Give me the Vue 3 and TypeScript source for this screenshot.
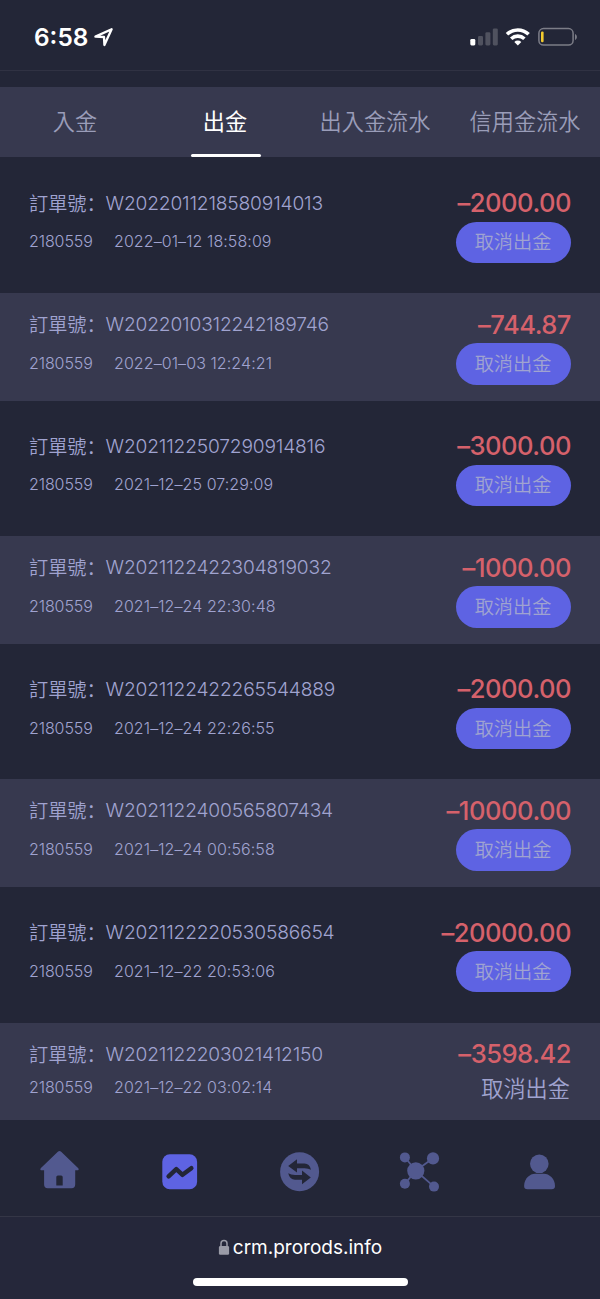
<script setup lang="ts">
interface Order {
  id: string
  time: string
  amount: string
  plain?: boolean
}

const tabs: string[] = ['入金', '出金', '出入金流水', '信用金流水']
const activeTab = 1
const account = '2180559'

const orders: Order[] = [
  { id: 'W2022011218580914013', time: '2022–01–12 18:58:09', amount: '–2000.00' },
  { id: 'W2022010312242189746', time: '2022–01–03 12:24:21', amount: '–744.87' },
  { id: 'W2021122507290914816', time: '2021–12–25 07:29:09', amount: '–3000.00' },
  { id: 'W2021122422304819032', time: '2021–12–24 22:30:48', amount: '–1000.00' },
  { id: 'W2021122422265544889', time: '2021–12–24 22:26:55', amount: '–2000.00' },
  { id: 'W2021122400565807434', time: '2021–12–24 00:56:58', amount: '–10000.00' },
  { id: 'W2021122220530586654', time: '2021–12–22 20:53:06', amount: '–20000.00' },
  { id: 'W2021122203021412150', time: '2021–12–22 03:02:14', amount: '–3598.42', plain: true },
]
</script>

<template>
  <div class="screen">
    <header class="status">
      <div class="clock">
        <span class="time">6:58</span>
        <svg class="arrow" width="20" height="20" viewBox="0 0 20 20">
          <path d="M1.4 9.6 17.6 2.2 10.4 18 10 10Z" fill="none" stroke="#fff" stroke-width="2.3" stroke-linejoin="round" />
        </svg>
      </div>
      <svg class="indicators" width="110" height="20" viewBox="0 0 110 20">
        <rect x="0.3" y="12" width="5" height="6.4" rx="1.3" fill="#fff" />
        <rect x="8" y="9" width="5" height="9.4" rx="1.3" fill="#50525f" />
        <rect x="15.4" y="5.2" width="5" height="13.2" rx="1.3" fill="#50525f" />
        <rect x="22.8" y="1.4" width="5" height="17" rx="1.3" fill="#50525f" />
        <g fill="none" stroke="#fff" stroke-width="3.6">
          <path d="M37 7.2a15.8 15.8 0 0 1 21.6 0" />
          <path d="M41.2 11.7a9.7 9.7 0 0 1 13.2 0" />
        </g>
        <path d="M47.8 18.4 44.3 14.9a5 5 0 0 1 7 0Z" fill="#fff" />
        <rect x="68.9" y="1.6" width="34.2" height="16.4" rx="4.6" fill="none" stroke="#7c7d87" stroke-width="1.5" />
        <rect x="71" y="4.4" width="2.6" height="10.8" rx="1.2" fill="#f3cb2e" />
        <path d="M105 6.9c2.5 1 2.5 5 0 6Z" fill="#7c7d87" />
      </svg>
    </header>

    <nav class="tabs">
      <div v-for="(tab, i) in tabs" :key="tab" class="tab" :class="{ active: i === activeTab }">
        <span>{{ tab }}</span>
      </div>
    </nav>

    <main class="orders">
      <article v-for="(order, i) in orders" :key="order.id" class="order" :class="{ light: i % 2 === 1, plain: order.plain }">
        <div class="line main-line">
          <div class="title"><span class="label">訂單號：</span><span class="id">{{ order.id }}</span></div>
          <div class="amount">{{ order.amount }}</div>
        </div>
        <div class="line sub-line">
          <div class="meta"><span class="account">{{ account }}</span><span class="date">{{ order.time }}</span></div>
          <button class="cancel" type="button">取消出金</button>
        </div>
      </article>
    </main>

    <footer class="dock">
      <div class="dock-item">
        <svg width="44" height="44" viewBox="0 0 44 44" fill="#52598f">
          <path fill-rule="evenodd" d="M20.1 1.6Q21.5.4 22.9 1.6L40.3 18.2Q41.5 20.3 39.1 20.3H37.2V34.6Q37.2 38.3 33.5 38.3H9.7Q6.1 38.3 6.1 34.6V20.3H3.9Q1.5 20.3 2.7 18.2ZM18.3 27V35.4H24.7V27Q24.7 25.4 23.1 25.4H19.9Q18.3 25.4 18.3 27Z" />
        </svg>
      </div>
      <div class="dock-item">
        <svg width="44" height="44" viewBox="0 0 44 44">
          <rect x="4.3" y="4.3" width="34.8" height="35" rx="7.5" fill="#5e63e3" />
          <path d="M10.6 26.3 18.3 19.2 24.5 24.8 33.3 18.2" fill="none" stroke="#232637" stroke-width="4.5" stroke-linecap="round" stroke-linejoin="round" />
        </svg>
      </div>
      <div class="dock-item">
        <svg width="44" height="44" viewBox="0 0 44 44">
          <circle cx="21.6" cy="21.8" r="19.5" fill="#52598f" />
          <path d="M10.2 16 19 9.2V13.6H26.5Q31.5 13.6 33 19.8Q30.5 18.3 26.5 18.3H19V22.6Z" fill="#232637" />
          <path d="M32.8 27.4 24 34.2V29.8H17Q11.8 29.8 10.2 23.3Q13 25.1 17 25.1H24V20.6Z" fill="#232637" />
        </svg>
      </div>
      <div class="dock-item">
        <svg width="44" height="44" viewBox="0 0 44 44" fill="#52598f">
          <path d="M7 7.3 17.8 20.8 35 8.3M7 33.6 17.8 20.8 36 36.6" fill="none" stroke="#52598f" stroke-width="1.7" />
          <circle cx="17.8" cy="20.8" r="8.6" />
          <circle cx="6.9" cy="7.4" r="5" />
          <circle cx="35" cy="8.4" r="6.1" />
          <circle cx="6.9" cy="33.7" r="5" />
          <circle cx="36" cy="36.6" r="5" />
        </svg>
      </div>
      <div class="dock-item">
        <svg width="44" height="44" viewBox="0 0 44 44" fill="#52598f">
          <circle cx="21.3" cy="13.8" r="9.3" />
          <path d="M6.1 36C6.1 28.5 12 23.8 17 23.8H26C31 23.8 37 28.5 37 36Q37 39.2 33.6 39.2H9.5Q6.1 39.2 6.1 36Z" />
        </svg>
      </div>
    </footer>

    <div class="browser-bar">
      <div class="address">
        <svg width="12" height="17" viewBox="0 0 12 17">
          <path d="M3 8V4.6a3 3 0 0 1 6 0V8" fill="none" stroke="#9a9ba7" stroke-width="1.5" />
          <rect x="0.9" y="7" width="10.2" height="8.8" rx="1.4" fill="#9a9ba7" />
        </svg>
        <span>crm.prorods.info</span>
      </div>
      <div class="home-bar"></div>
    </div>
  </div>
</template>

<style>
body {
  margin: 0;
  background: #232637;
}
</style>

<style scoped>
.screen {
  display: flex;
  flex-direction: column;
  width: 600px;
  height: 1299px;
  overflow: hidden;
  background: #232637;
  color: #a0a3d0;
  font-family: Inter, "Noto Sans CJK TC", sans-serif;
}

.status {
  display: flex;
  justify-content: space-between;
  box-sizing: border-box;
  height: 71px;
  margin-bottom: 16px;
  padding: 27px 20px 0 34px;
  border-bottom: 1px solid #303243;
}

.clock {
  display: flex;
  height: 20px;
  align-items: center;
  gap: 6px;
  color: #fff;
}

.time {
  font-size: 24.4px;
  font-weight: 600;
  line-height: 20px;
}

.tabs {
  display: flex;
  flex: none;
  height: 70px;
  background: #37394f;
}

.tab {
  display: flex;
  flex: 1;
  flex-direction: column;
  align-items: center;
  font-size: 22.2px;
  font-weight: 350;
  line-height: 67px;
  white-space: nowrap;
  color: #9a9db9;
}

.tab span {
  height: 66px;
  padding-top: 1px;
}

.tab.active {
  font-weight: 400;
  color: #fff;
}

.tab.active::after {
  content: "";
  width: 70px;
  height: 3px;
  margin-left: 1px;
  border-radius: 2px;
  background: #fff;
}

.orders {
  display: flex;
  flex: none;
  flex-direction: column;
  gap: 14.2px;
  padding-top: 14.6px;
}

.order {
  box-sizing: border-box;
  height: 107.4px;
  padding: 12px 29px 0;
}

.order.light {
  background: #37394f;
}

.order.plain {
  height: 97.2px;
}

.line {
  display: flex;
  align-items: center;
  justify-content: space-between;
  white-space: nowrap;
}

.main-line {
  height: 38px;
}

.title {
  display: flex;
  align-items: center;
  font-size: 19.2px;
  font-weight: 350;
  line-height: 38px;
}

.label {
  width: 76.6px;
  font-family: "Noto Sans CJK SC", sans-serif;
}

.id {
  letter-spacing: -0.18px;
}

.amount {
  padding-top: 1px;
  font-size: 25.6px;
  font-weight: 500;
  line-height: 38px;
  letter-spacing: -0.5px;
  color: #d5616b;
}

.sub-line {
  height: 41.4px;
}

.plain .sub-line {
  height: 31px;
}

.meta {
  display: flex;
  padding-bottom: 2px;
  font-size: 16px;
  font-weight: 350;
  line-height: 38px;
}

.account {
  width: 85px;
  letter-spacing: -0.1px;
}

.date {
  letter-spacing: 0.08px;
}

.cancel {
  width: 115px;
  height: 41.4px;
  padding: 0 1px 0 0;
  border: 0;
  border-radius: 21px;
  background: #5e63e3;
  color: #a0a3d0;
  font-family: inherit;
  font-size: 19.2px;
  font-weight: 350;
  line-height: 40px;
}

.plain .cancel {
  width: auto;
  height: 31px;
  background: none;
  font-size: 22.2px;
  line-height: 31px;
}

.dock {
  display: flex;
  flex: none;
  box-sizing: border-box;
  height: 96px;
  padding-top: 30px;
}

.dock-item {
  display: flex;
  flex: 1;
  justify-content: center;
}

.browser-bar {
  display: flex;
  flex: 1;
  flex-direction: column;
  align-items: center;
  box-sizing: border-box;
  padding-top: 18px;
  border-top: 1px solid #343646;
  background: #25273a;
}

.address {
  display: flex;
  align-items: center;
  gap: 3px;
  height: 26px;
  font-size: 19px;
  color: #fff;
}

.home-bar {
  width: 215px;
  height: 8px;
  margin-top: 17px;
  border-radius: 4px;
  background: #fff;
}
</style>
